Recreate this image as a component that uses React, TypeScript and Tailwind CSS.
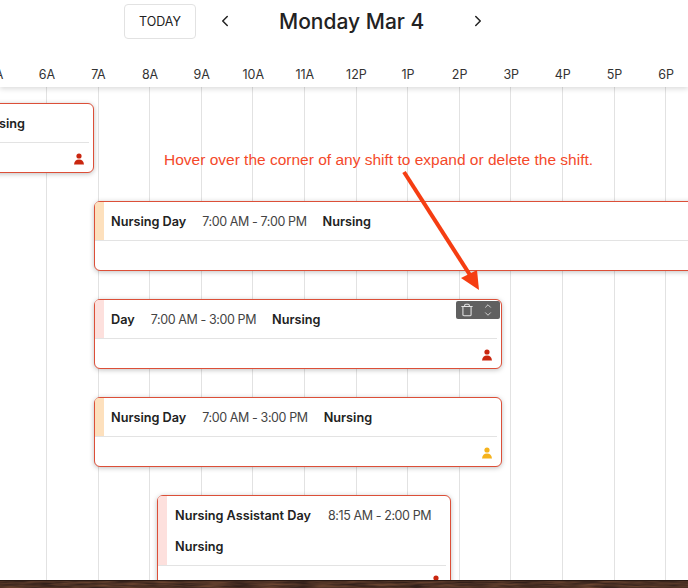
import { ChevronLeft, ChevronRight, ChevronUp, ChevronDown, Trash } from "lucide-react";

const hours = ["5A", "6A", "7A", "8A", "9A", "10A", "11A", "12P", "1P", "2P", "3P", "4P", "5P", "6P"];

function Person({ color }: { color: string }) {
  return (
    <svg width="10" height="12" viewBox="0 0 10 12" fill={color}>
      <circle cx="5" cy="3" r="2.6" />
      <path d="M0 11.5 C0.4 8 2 6.6 5 6.6 C8 6.6 9.6 8 10 11.5 Z" />
    </svg>
  );
}

type ShiftProps = {
  className: string;
  stripe: string;
  name: string;
  time: string;
  personColor?: string;
  hovered?: boolean;
};

function Shift({ className, stripe, name, time, personColor = "#c9260f", hovered }: ShiftProps) {
  return (
    <div className={`relative flex h-[70px] shrink-0 flex-col rounded-[6px] border-[1.5px] border-[#dc4f38] bg-white shadow-[0_1px_5px_rgba(0,0,0,0.25)] ${className}`}>
      <div className="mr-[4px] flex h-[39px] items-stretch border-b border-[#e3e3e3]">
        <div className={`w-[9px] rounded-tl-[4px] ${stripe}`} />
        <div className="flex items-center pl-[7px] pt-[2px] text-[12.7px] text-[#222]">
          <span className="font-semibold">{name}</span>
          <span className="ml-[16px] text-[12.5px] tracking-[-0.4px] text-[#444]">{time}</span>
          <span className="ml-[16px] font-semibold">Nursing</span>
        </div>
      </div>
      <div className="flex flex-1 items-center justify-end pr-[9px] pt-[2px]">
        <Person color={personColor} />
      </div>
      {hovered && (
        <div className="absolute right-[1px] top-[1px] flex h-[18px] w-[44px] items-center justify-between rounded-[2px] bg-[#606060] pl-[4px] pr-[7px]">
          <Trash size={14} strokeWidth={1.8} className="text-[#e4e4e4]" />
          <div className="flex flex-col items-center">
            <ChevronUp size={10} strokeWidth={2} className="mb-[-1px] text-[#e4e4e4]" />
            <ChevronDown size={10} strokeWidth={2} className="mt-[-1px] text-[#e4e4e4]" />
          </div>
        </div>
      )}
    </div>
  );
}

export default function App() {
  return (
    <div className="relative flex h-[588px] w-[688px] flex-col overflow-hidden bg-white font-['Inter',sans-serif] text-[#222]">
      {/* top bar */}
      <div className="relative z-20 h-[87px] shrink-0 bg-white shadow-[0_2px_5px_rgba(0,0,0,0.14)]">
        <div className="flex h-[66px] items-start pt-[4px]">
          <button className="ml-[124px] h-[35px] w-[72px] rounded-[4px] border border-[#e2e2e2] pt-[1px] text-[12.5px] text-[#222]">TODAY</button>
          <ChevronLeft size={18} strokeWidth={2} className="ml-[20px] mt-[8px]" />
          <div className="ml-[45px] mt-[3px] text-[21px] font-medium leading-[29px] text-[#222]">Monday Mar 4</div>
          <ChevronRight size={18} strokeWidth={2} className="ml-[45px] mt-[8px]" />
        </div>
        <div className="ml-[-30.5px] flex text-[12.5px] text-[#333]">
          {hours.map((h) => (
            <div key={h} className="w-[51.6px] shrink-0 text-center">{h}</div>
          ))}
        </div>
      </div>

      {/* schedule */}
      <div className="relative min-h-0 flex-1">
        <div className="absolute inset-0 flex pl-[46px]">
          {hours.slice(1).map((h) => (
            <div key={h} className="h-full w-[51.6px] shrink-0 border-l border-[#e2e2e2]" />
          ))}
        </div>
        <div className="relative flex flex-col gap-[28px] pt-[16px]">
          <div className="ml-[-40px] w-[134px]">
            <div className="relative flex h-[70px] flex-col rounded-[6px] border-[1.5px] border-[#dc4f38] bg-white shadow-[0_1px_5px_rgba(0,0,0,0.25)]">
              <div className="mr-[4px] flex h-[39px] items-center justify-end border-b border-[#e3e3e3] pr-[64px] pt-[2px] text-[12.7px] font-semibold text-[#222]">Nursing</div>
              <div className="flex flex-1 items-center justify-end pr-[9px] pt-[2px]">
                <Person color="#c9260f" />
              </div>
            </div>
          </div>
          <Shift className="ml-[94px] w-[640px]" stripe="bg-[#fde0bd]" name="Nursing Day" time="7:00 AM - 7:00 PM" />
          <Shift className="ml-[94px] w-[408px]" stripe="bg-[#fde0dd]" name="Day" time="7:00 AM - 3:00 PM" hovered />
          <Shift className="ml-[94px] w-[408px]" stripe="bg-[#fde0bd]" name="Nursing Day" time="7:00 AM - 3:00 PM" personColor="#f5b21b" />
          <div className="ml-[157px] flex h-[100px] w-[294px] shrink-0 flex-col rounded-[6px] border-[1.5px] border-[#dc4f38] bg-white shadow-[0_1px_5px_rgba(0,0,0,0.25)]">
            <div className="mr-[4px] flex h-[70px] items-stretch border-b border-[#e3e3e3]">
              <div className="w-[9px] rounded-tl-[4px] bg-[#fde0dd]" />
              <div className="pl-[8px] pt-[4px] text-[12.7px] leading-[31px]">
                <div>
                  <span className="font-semibold">Nursing Assistant Day</span>
                  <span className="ml-[17px] text-[12.5px] tracking-[-0.4px] text-[#444]">8:15 AM - 2:00 PM</span>
                </div>
                <div className="font-semibold">Nursing</div>
              </div>
            </div>
            <div className="flex justify-end pr-[9px] pt-[9px]">
              <Person color="#c9260f" />
            </div>
          </div>
        </div>

        {/* annotation over the schedule */}
        <div className="absolute left-[164px] top-[64px] whitespace-nowrap font-['Liberation_Sans',sans-serif] text-[15.5px] leading-[18px] text-[#f4492a]">
          Hover over the corner of any shift to expand or delete the shift.
        </div>
        <svg className="absolute left-[395px] top-[78px]" width="95" height="130" viewBox="0 0 95 130" fill="#f53d12">
          <path d="M7.3 8.1 L10.7 5.9 L76.7 108.9 L73.3 111.1 Z" />
          <path d="M84 125 L66 113 L82 105 Z" />
        </svg>
      </div>

      {/* desktop showing below the window */}
      <svg className="relative z-30 block shrink-0" width="688" height="8" viewBox="0 0 688 8">
        <filter id="wood" x="0" y="0" width="100%" height="100%" colorInterpolationFilters="sRGB">
          <feTurbulence type="fractalNoise" baseFrequency="0.035 0.5" numOctaves="3" seed="4" />
          <feColorMatrix values="0 0 0 0 0.42  0 0 0 0 0.27  0 0 0 0 0.19  0 0 0 1.6 -0.35" />
        </filter>
        <rect width="688" height="8" fill="#33201a" />
        <rect width="688" height="8" filter="url(#wood)" />
        <rect width="688" height="1" fill="#2a1a14" />
      </svg>
    </div>
  );
}
